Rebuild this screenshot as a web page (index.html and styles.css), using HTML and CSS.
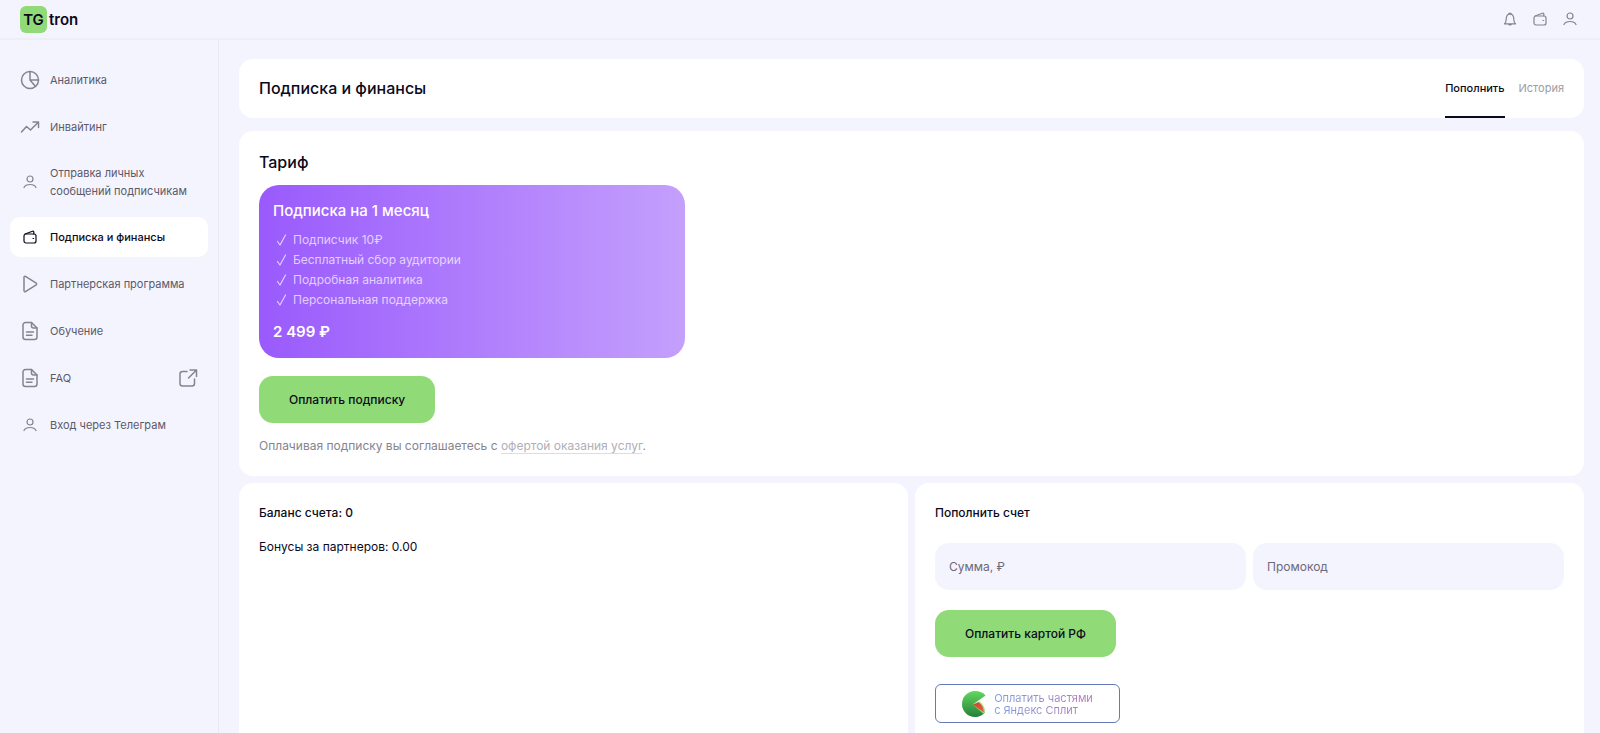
FILE: index.html
```
<!DOCTYPE html>
<html lang="ru">
  <head>
    <meta charset="UTF-8" />
    <meta name="viewport" content="width=device-width, initial-scale=1" />
    <title>TGtron</title>
    <link rel="stylesheet" href="styles.css">
  </head>
  <body>
    <!-- shared icons -->
    <svg class="sprite" aria-hidden="true">
      <symbol id="user" viewBox="0 0 20 20">
        <circle cx="10" cy="7" r="3" />
        <path d="M4 15.5c1-2 3.200-3 6-3s5 1 6 3" />
      </symbol>
      <symbol id="wallet" viewBox="0 0 20 20">
        <rect x="4" y="7" width="12" height="9" rx="2" />
        <path d="M5 7l7.500-2.800a1 1 0 0 1 1.300.9V7" />
        <path d="M13 11.500h.6" />
      </symbol>
      <symbol id="doc" viewBox="0 0 20 20">
        <path d="M11.500 1.500H5.500a2.500 2.500 0 0 0-2.500 2.500v12a2.500 2.500 0 0 0 2.500 2.500h9a2.500 2.500 0 0 0 2.500-2.500V7z" />
        <path d="M11.500 1.500V5a2 2 0 0 0 2 2H17M6.500 11h7M6.500 14.300h5.500" />
      </symbol>
      <symbol id="check" viewBox="0 0 20 20">
        <path d="M4.500 11.500l2.500 3.500 5.500-10" />
      </symbol>
    </svg>

    <header class="header">
      <a href="#" class="logo"><span class="logoMark">TG</span>tron</a>
      <div class="headerIcons">
        <button type="button" aria-label="Уведомления">
          <svg class="icon" viewBox="0 0 20 20"><path d="M4.500 14.800h11c-1.300-1.200-1.700-2.600-1.700-4.600 0-2.800-1.300-5-3.800-5s-3.800 2.200-3.800 5c0 2-.4 3.400-1.700 4.600zM8.700 5.300a1.300 1.300 0 1 1 2.600 0M8.500 15c.3 1.300 2.700 1.300 3 0" /></svg>
        </button>
        <button type="button" aria-label="Кошелек">
          <svg class="icon"><use href="#wallet" /></svg>
        </button>
        <button type="button" aria-label="Профиль">
          <svg class="icon"><use href="#user" /></svg>
        </button>
      </div>
    </header>

    <div class="layout">
      <nav class="sidebar">
        <a href="#">
          <svg class="icon bold" viewBox="0 0 20 20"><circle cx="10" cy="10" r="8.500" /><path d="M10 1.500V10h8.500M10 10l5.500 6.500" /></svg>
          <span>Аналитика</span>
        </a>
        <a href="#">
          <svg class="icon bold" viewBox="0 0 20 20"><path d="M1.500 15l5-5.500 4 3.500 8-8M13 5h5.500v5.500" /></svg>
          <span>Инвайтинг</span>
        </a>
        <a href="#">
          <svg class="icon"><use href="#user" /></svg>
          <span>Отправка личных сообщений подписчикам</span>
        </a>
        <a href="#" class="active">
          <svg class="icon"><use href="#wallet" /></svg>
          <span>Подписка и финансы</span>
        </a>
        <a href="#">
          <svg class="icon bold" viewBox="0 0 20 20"><path d="M4 3.200v13.600a1 1 0 0 0 1.500.8l10.700-6.800a1 1 0 0 0 0-1.600L5.500 2.400A1 1 0 0 0 4 3.200z" /></svg>
          <span>Партнерская программа</span>
        </a>
        <a href="#">
          <svg class="icon bold"><use href="#doc" /></svg>
          <span>Обучение</span>
        </a>
        <a href="#">
          <svg class="icon bold"><use href="#doc" /></svg>
          <span>FAQ</span>
          <svg class="icon bold external" viewBox="0 0 20 20"><path d="M9 3.500H4.500a2.500 2.500 0 0 0-2.500 2.500v9.500A2.500 2.500 0 0 0 4.500 18H14a2.500 2.500 0 0 0 2.500-2.500V11M12 2h6.500v6.500M18.300 2.200L10.500 10" /></svg>
        </a>
        <a href="#">
          <svg class="icon"><use href="#user" /></svg>
          <span>Вход через Телеграм</span>
        </a>
      </nav>

      <main class="main">
        <div class="card titleCard">
          <h1>Подписка и финансы</h1>
          <div class="tabs">
            <a href="#" class="active">Пополнить</a>
            <a href="#">История</a>
          </div>
        </div>

        <section class="card tariffCard">
          <h2>Тариф</h2>
          <div class="tariff">
            <h3>Подписка на 1 месяц</h3>
            <ul>
              <li><svg class="icon"><use href="#check" /></svg>Подписчик 10₽</li>
              <li><svg class="icon"><use href="#check" /></svg>Бесплатный сбор аудитории</li>
              <li><svg class="icon"><use href="#check" /></svg>Подробная аналитика</li>
              <li><svg class="icon"><use href="#check" /></svg>Персональная поддержка</li>
            </ul>
            <div class="price">2 499 ₽</div>
          </div>
          <button type="button" class="btn">Оплатить подписку</button>
          <p class="terms">Оплачивая подписку вы соглашаетесь с <a href="#">офертой оказания услуг</a>.</p>
        </section>

        <div class="columns">
          <section class="card">
            <h4>Баланс счета: 0</h4>
            <p class="bonus">Бонусы за партнеров: 0.00</p>
          </section>
          <section class="card">
            <h4>Пополнить счет</h4>
            <form class="payForm">
              <div class="fields">
                <input type="text" placeholder="Сумма, ₽" aria-label="Сумма, ₽" />
                <input type="text" placeholder="Промокод" aria-label="Промокод" />
              </div>
              <button type="submit" class="btn">Оплатить картой РФ</button>
              <button type="button" class="splitBtn">
                <svg class="splitLogo" viewBox="0 0 24 26">
                  <defs>
                    <linearGradient id="rind" x1="0" y1="0" x2="0" y2="1">
                      <stop offset="0" stop-color="#62d860" />
                      <stop offset="1" stop-color="#26803a" />
                    </linearGradient>
                    <linearGradient id="pulp" x1="0" y1="0" x2="1" y2="1">
                      <stop offset="0" stop-color="#c8432e" />
                      <stop offset="1" stop-color="#e8603e" />
                    </linearGradient>
                  </defs>
                  <path fill="url(#rind)" d="M23.500 4.500C21.500 1.500 17.500 0 13 0A13 13 0 0 0 13 26c4 0 8-1.500 10-5L11.500 13z" />
                  <path fill="#a4d98a" d="M11 13.500l6-3.300c3.800 2.300 6 6.500 6 10.800l-1.500 1.800z" />
                  <path fill="url(#pulp)" d="M11 13.500l5.500-2.300c3.500 2.300 5.300 6 5.300 10.300z" />
                </svg>
                <span>Оплатить частями<br />с Яндекс Сплит</span>
              </button>
            </form>
          </section>
        </div>
      </main>
    </div>
  </body>
</html>
```
FILE: styles.css
```
* {
  box-sizing: border-box;
}
body {
  margin: 0;
  min-height: 100vh;
  display: flex;
  flex-direction: column;
  background: #f4f4fe;
  color: #0b0a1c;
  font-family: Inter, "Liberation Sans", sans-serif;
  font-size: 12px;
}
h1,
h2,
h3,
h4,
p,
ul {
  margin: 0;
  padding: 0;
}
a {
  color: inherit;
  text-decoration: none;
}
button,
input {
  font-family: inherit;
  border: 0;
}
button {
  padding: 0;
  background: none;
  color: inherit;
  cursor: pointer;
}

.sprite {
  display: none;
}
.icon {
  width: 20px;
  height: 20px;
  flex: none;
  display: block;
  fill: none;
  stroke: currentColor;
  stroke-width: 1.2;
  stroke-linecap: round;
  stroke-linejoin: round;
}
.icon.bold {
  stroke-width: 1.5;
}

/* header */
.header {
  display: flex;
  align-items: center;
  justify-content: space-between;
  height: 40px;
  padding: 0 20px;
  border-bottom: 2px solid #eeeef8;
}
.logo {
  display: flex;
  align-items: center;
  gap: 2px;
  font-size: 15px;
  font-weight: 600;
}
.logoMark {
  width: 27px;
  height: 27px;
  line-height: 27px;
  text-align: center;
  border-radius: 6px;
  background: #90da78;
}
.headerIcons {
  display: flex;
  gap: 10px;
  color: #85848e;
}

/* sidebar */
.layout {
  flex: 1;
  display: flex;
}
.sidebar {
  width: 219px;
  flex: none;
  display: flex;
  flex-direction: column;
  gap: 7px;
  padding: 20px 10px;
  border-right: 1px solid #e9e9f3;
}
.sidebar a {
  display: flex;
  align-items: center;
  gap: 10px;
  padding: 10px;
  border-radius: 10px;
  font-size: 11px;
  line-height: 18px;
  color: #5b5968;
}
.sidebar .icon {
  color: #85848e;
}
.sidebar .active {
  background: #fff;
  color: #0b0a1c;
  font-weight: 500;
}
.sidebar .active .icon {
  color: #0b0a1c;
}
.sidebar .external {
  margin-left: auto;
}

/* content */
.main {
  flex: 1;
  min-width: 0;
  display: flex;
  flex-direction: column;
  padding: 19px 16px 0 20px;
}
.card {
  background: #fff;
  border-radius: 14px;
  padding: 20px;
}
.titleCard {
  display: flex;
  justify-content: space-between;
  padding: 0 20px;
  margin-bottom: 13px;
}
h1,
h2 {
  font-size: 16px;
  font-weight: 500;
}
h1 {
  line-height: 59px;
}
h2 {
  line-height: 22px;
  margin-bottom: 12px;
}
.tabs {
  display: flex;
  gap: 14px;
  font-size: 11px;
  line-height: 59px;
  color: #9c9ba4;
}
.tabs .active {
  color: #0b0a1c;
  font-weight: 500;
  box-shadow: inset 0 -2px #0b0a1c;
}

.tariffCard {
  margin-bottom: 7px;
}
.tariff {
  max-width: 426px;
  margin-bottom: 18px;
  padding: 14px;
  border-radius: 20px;
  background: linear-gradient(90deg, #9a5afc, #c4a0fc);
  color: #fff;
}
h3,
.price {
  font-size: 15px;
  line-height: 24px;
}
h3 {
  font-weight: 500;
}
.price {
  margin-top: 10px;
  font-weight: 600;
}
.tariff ul {
  margin-top: 7px;
  list-style: none;
  line-height: 20px;
  color: rgba(255, 255, 255, 0.7);
}
.tariff li {
  display: flex;
}
.btn {
  display: block;
  height: 47px;
  padding: 0 30px;
  border-radius: 14px;
  background: #90da78;
  color: #0b0a1c;
  font-size: 12px;
  font-weight: 500;
}
.terms {
  margin-top: 13px;
  line-height: 20px;
  color: #85848e;
}
.terms a {
  color: #b0afb7;
  border-bottom: 1px solid #dcdce2;
}

.columns {
  flex: 1;
  display: grid;
  grid-template-columns: 1fr 1fr;
  gap: 7px;
}
.columns .card {
  border-radius: 14px 14px 0 0;
  padding-bottom: 10px;
}
h4,
.bonus {
  font-size: 12px;
  line-height: 20px;
}
h4 {
  font-weight: 500;
}
.bonus {
  margin-top: 14px;
}
.fields {
  display: grid;
  grid-template-columns: 1fr 1fr;
  gap: 7px;
  margin: 20px 0;
}
.fields input {
  min-width: 0;
  height: 47px;
  padding: 0 14px;
  border-radius: 14px;
  background: #f4f4fe;
  font-size: 12px;
}
.fields input::placeholder {
  color: #6d6b78;
}
.splitBtn {
  display: flex;
  align-items: center;
  justify-content: center;
  gap: 8px;
  width: 185px;
  height: 39px;
  margin-top: 27px;
  border: 1px solid #6478bc;
  border-radius: 6px;
  background: #fff;
  font-size: 11px;
  line-height: 12px;
  text-align: left;
}
.splitBtn span {
  background: linear-gradient(90deg, #7fa0e0, #b878b8);
  background-clip: text;
  -webkit-background-clip: text;
  color: transparent;
}
.splitLogo {
  width: 24px;
  height: 26px;
}
```
